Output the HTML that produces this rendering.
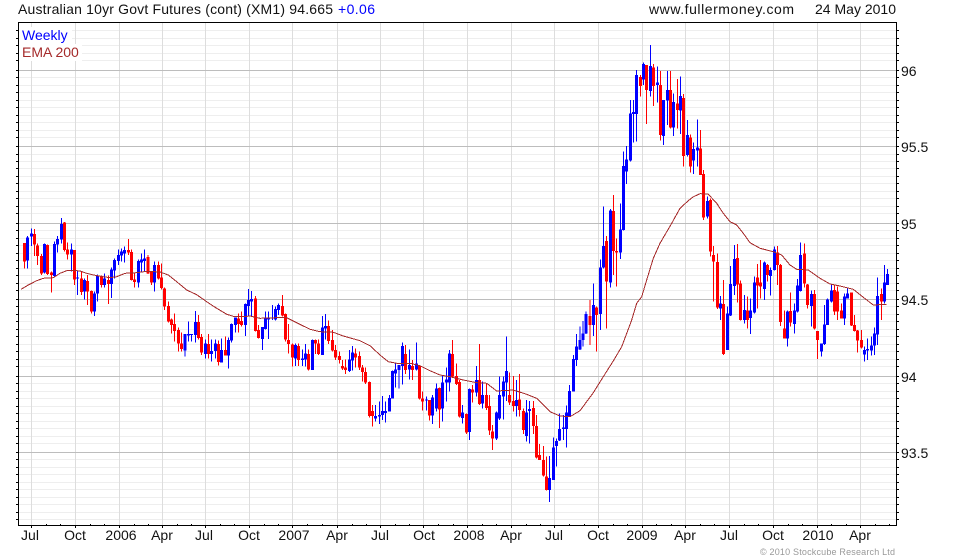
<!DOCTYPE html>
<html><head><meta charset="utf-8"><title>Chart</title>
<style>
html,body{margin:0;padding:0;background:#fff}
svg{display:block}
text{font-family:"Liberation Sans",Arial,sans-serif;font-size:14px;fill:#111}
.bw,.bb{stroke:#0000ff;fill:none}
.rw,.rb{stroke:#ff0000;fill:none}
.bw,.rw{stroke-width:3}
.bb,.rb{stroke-width:9}
</style></head><body>
<svg xmlns="http://www.w3.org/2000/svg" width="980" height="560" viewBox="0 0 980 560">
<rect width="980" height="560" fill="#fff"/>
<g shape-rendering="crispEdges" fill="none">
<path stroke="#eeeeee" d="M19 30.5H896M19 38.5H896M19 45.5H896M19 53.5H896M19 60.5H896M19 77.5H896M19 85.5H896M19 92.5H896M19 100.5H896M19 107.5H896M19 115.5H896M19 122.5H896M19 130.5H896M19 137.5H896M19 154.5H896M19 161.5H896M19 168.5H896M19 176.5H896M19 183.5H896M19 191.5H896M19 198.5H896M19 206.5H896M19 213.5H896M19 230.5H896M19 238.5H896M19 245.5H896M19 253.5H896M19 260.5H896M19 268.5H896M19 275.5H896M19 283.5H896M19 290.5H896M19 306.5H896M19 314.5H896M19 321.5H896M19 329.5H896M19 336.5H896M19 344.5H896M19 351.5H896M19 359.5H896M19 366.5H896M19 383.5H896M19 391.5H896M19 398.5H896M19 406.5H896M19 413.5H896M19 421.5H896M19 428.5H896M19 436.5H896M19 443.5H896M19 459.5H896M19 467.5H896M19 474.5H896M19 482.5H896M19 489.5H896M19 497.5H896M19 504.5H896M19 512.5H896M19 519.5H896"/>
<path stroke="#dddddd" d="M31.5 23V525M75.5 23V525M119.5 23V525M162.5 23V525M205.5 23V525M249.5 23V525M292.5 23V525M337.5 23V525M380.5 23V525M423.5 23V525M467.5 23V525M511.5 23V525M554.5 23V525M598.5 23V525M642.5 23V525M685.5 23V525M729.5 23V525M773.5 23V525M817.5 23V525M860.5 23V525"/>
<path stroke="#bdbdbd" d="M19 70.5H896M19 146.5H896M19 223.5H896M19 299.5H896M19 376.5H896M19 452.5H896"/>
</g>
<rect x="19" y="27" width="53" height="17" fill="#fff"/>
<rect x="19" y="44" width="63" height="17" fill="#fff"/>

<g shape-rendering="crispEdges">
<g transform="translate(10 210) scale(.33333)">
<path class="bw" d="M52 78V176M64 55V108M103 100V190M133 95V200M142 78V128M154 24V100M184 100V185M203 183V255M223 205V268M253 245V318M263 193V275M284 190V232M304 172V264M313 145V205M325 118V165M334 115V155M343 110V158M385 148V233M394 130V185M403 118V185M433 155V245M525 372V440M535 335V395M545 372V395M556 303V398M586 388V445M605 388V455M616 388V445M635 385V458M656 382V476M664 340V398M676 323V368M706 280V378M715 237V318M724 243V320"/>
<path class="bb" d="M52 82V152M64 70V80M103 102V188M133 102V198M142 87V104M154 42V88M184 118V134M203 202V206M223 210V245M253 250V305M263 198V250M284 205V225M304 178V222M313 150V182M325 135V153M334 125V137M343 120V130M385 153V218M394 148V158M403 145V153M433 165V218M525 372V422M535 372V377M545 372V375M556 336V375M586 400V432M605 423V432M616 400V423M635 420V458M656 390V437M664 342V392M676 323V345M706 282V345M715 270V288M724 267V275"/>
<path class="rw" d="M43 99V176M73 57V138M83 100V165M94 132V195M113 103V195M124 185V248M163 36V125M173 98V148M193 120V225M214 185V255M232 195V285M244 242V310M274 196V232M295 196V282M355 87V135M364 118V212M374 188V233M414 135V192M424 183V225M445 155V208M454 160V238M463 232V300M475 275V338M484 325V370M493 310V395M505 353V425M514 368V425M565 315V388M574 372V435M595 372V445M625 392V467M646 380V437M685 310V368M694 305V350M736 258V365M745 345V386"/>
<path class="rb" d="M43 99V155M73 72V104M83 106V138M94 138V190M113 105V192M124 188V195M163 38V120M173 118V134M193 120V208M214 205V246M232 213V245M244 243V305M274 198V225M295 210V222M355 120V128M364 126V210M374 208V216M414 141V190M424 185V217M445 165V205M454 202V234M463 235V290M475 288V335M484 328V345M493 342V363M505 360V400M514 400V417M565 336V384M574 381V428M595 402V432M625 402V456M646 420V437M685 326V342M694 333V345M736 265V363M745 360V384"/>
</g>
<g transform="translate(250 280) scale(.33333)">
<path class="bw" d="M37 141V210M46 95V148M55 95V177M67 75V120M76 80V122M85 70V105M136 190V258M157 208V258M166 192V260M187 178V270M217 108V225M226 102V178M298 210V276M307 198V272M376 375V425M388 365V432M397 348V420M406 365V428M418 345V395M427 272V355M436 250V322M447 265V325M457 187V313M478 208V298M499 188V272M529 350V392M547 345V432M559 310V395M577 285V425M589 262V365M598 210V335M637 375V430M658 325V480M679 258V350M697 305V385M739 395V480M748 290V420"/>
<path class="bb" d="M37 141V177M46 113V147M55 113V118M67 112V116M76 87V118M85 75V90M136 195V235M157 235V240M166 220V238M187 180V270M217 142V225M226 138V145M298 238V273M307 218V242M376 408V415M388 405V410M397 393V405M406 393V399M418 354V395M427 273V355M436 268V280M447 255V270M457 198V258M478 255V268M499 250V268M529 358V362M547 352V407M559 325V385M577 308V386M589 298V308M598 220V308M637 397V414M658 327V456M679 300V338M697 345V370M739 397V475M748 345V415"/>
<path class="rw" d="M97 45V110M106 100V185M115 132V220M127 190V260M145 190V258M175 208V272M196 178V222M205 178V225M235 122V192M247 150V215M256 195V240M268 215V250M277 240V270M286 238V282M316 205V262M328 215V270M337 255V305M347 262V312M358 305V412M367 375V440M466 195V282M487 240V300M508 255V358M517 335V392M538 360V422M568 322V444M607 180V292M619 250V315M628 300V412M649 400V462M667 315V368M688 192V375M709 310V390M718 345V465M727 435V510"/>
<path class="rb" d="M97 78V107M106 102V178M115 180V192M127 193V232M145 198V240M175 222V268M196 180V190M205 190V222M235 138V183M247 180V212M256 210V232M268 228V240M277 258V265M286 262V270M316 220V232M328 228V263M337 263V276M347 276V308M358 306V408M367 393V408M466 222V270M487 258V270M508 258V356M517 355V365M538 360V407M568 324V388M607 222V290M619 288V312M628 306V410M649 402V458M667 328V338M688 300V372M709 345V384M718 378V452M727 454V475"/>
</g>
<g transform="translate(480 340) scale(.33333)">
<path class="bw" d="M70 110V238M79 -10V183M109 120V230M139 180V305M148 183V310M208 348V486M220 292V420M229 295V380M238 220V303M250 225V300M259 197V323M268 135V230M280 45V155M289 -18V78"/>
<path class="bb" d="M70 125V170M79 93V128M109 180V198M139 218V288M148 207V213M208 414V450M220 322V420M229 303V318M238 267V302M250 262V267M259 218V267M268 153V228M280 57V155M289 20V60"/>
<path class="rw" d="M88 97V195M100 108V215M118 102V230M130 205V282M160 183V282M169 225V355M178 312V360M190 318V410M199 350V452"/>
<path class="rb" d="M88 165V187M100 183V198M118 178V210M130 213V270M160 204V258M169 258V353M178 345V360M190 360V407M199 410V450"/>
</g>
<g transform="translate(560 190) scale(.33333)">
<path class="bw" d="M60 410V480M69 393V470M78 365V432M100 280V438M121 208V420M130 50V235M151 57V293M181 40V207"/>
<path class="bb" d="M60 450V478M69 430V450M78 372V430M100 345V405M121 232V372M130 168V232M151 62V278M181 118V188"/>
<path class="rw" d="M90 330V465M109 350V485M139 138V416M160 15V255M169 145V290"/>
<path class="rb" d="M90 378V405M109 352V375M139 153V275M160 63V183M169 183V188"/>
</g>
<g transform="translate(570 40) scale(.33333)">
<path class="bw" d="M160 335V572M169 318V432M181 180V365M190 180V308M199 90V305M220 68V135M241 15V170M262 80V188M280 180V315M292 93V255M310 160V288M331 110V282M352 240V350M370 308V402M382 238V380"/>
<path class="bb" d="M160 378V570M169 358V395M181 220V362M190 216V222M199 105V222M220 72V118M241 78V153M262 128V135M280 180V288M292 150V182M310 186V263M331 168V212M352 285V345M370 327V362M382 322V332"/>
<path class="rw" d="M211 105V170M229 75V252M250 72V198M271 93V302M301 93V265M322 117V265M340 162V380M361 283V398M391 270V405"/>
<path class="rb" d="M211 111V138M229 75V150M250 82V138M271 135V285M301 150V263M322 190V210M340 174V348M361 292V380M391 325V405"/>
</g>
<g transform="translate(680 190) scale(.33333)">
<path class="bw" d="M82 20V85M121 318V390M142 350V480M151 228V378M163 165V315M193 315V400M211 325V432M223 260V370M253 215V330M271 232V316M283 170V242M322 362V470M343 340V430M352 267V367M361 158V305M394 302V410M424 460V500M433 345V465M442 325V405M454 285V338M493 310V405M502 295V325M553 470V515M562 445V510M574 440V497M583 412V495M592 262V465M613 225V340M622 237V285"/>
<path class="bb" d="M82 33V80M121 340V356M142 370V480M151 282V376M163 207V288M193 360V390M211 362V384M223 278V367M253 218V297M271 240V258M283 178V240M322 365V445M343 362V402M352 286V365M361 195V303M394 312V348M424 460V484M433 403V462M442 328V405M454 302V335M493 320V386M502 310V325M553 480V494M562 477V482M574 467V482M583 430V467M592 318V433M613 277V335M622 252V285"/>
<path class="rw" d="M70 -60V90M91 25V200M100 168V335M112 190V357M130 270V495M172 162V338M181 272V392M202 320V415M232 222V356M241 210V325M262 222V275M292 168V285M301 222V408M313 362V445M332 308V410M373 160V293M382 282V355M403 300V418M412 423V507M463 285V375M472 290V390M484 340V385M514 308V408M523 375V425M532 420V488M544 420V475M604 295V390"/>
<path class="rb" d="M70 -48V83M91 30V185M100 195V215M112 216V353M130 342V492M172 204V283M181 280V390M202 362V390M232 262V287M241 278V290M262 225V255M292 188V225M301 225V396M313 415V445M332 363V398M373 190V280M382 284V345M403 312V416M412 423V450M463 300V365M472 305V365M484 362V385M514 308V406M523 405V423M532 422V452M544 450V473M604 312V335"/>
</g>
</g>

<polyline shape-rendering="crispEdges" fill="none" stroke="#a52a2a" stroke-width="1" points="21,289.3 28.3,285 36.7,280.7 43.3,278.3 53.3,277.7 60,273.3 66.7,270.7 73.3,270.3 80,271 86.7,273.3 93.3,275 103.3,276.7 110,277.7 116.7,276.7 125,273.3 136.7,272.7 146.7,271.3 160,272 168.3,275 176.7,281.7 186.7,290 196.7,294.7 206.7,301.7 216.7,308.3 226.7,314.3 233.3,316.3 243.3,316.7 250,316 260,318.3 276.7,317.7 286.7,317.7 296.7,322.7 310,329.3 320,331.7 333.3,332.3 343.3,336 360,340.7 370,345.7 380,355 388.3,361.7 396.7,363.3 410,363.3 420,365.7 430,370.7 440,375 450,376.7 463.3,380 476.7,382.7 486.7,383.3 496.7,391 513.3,390 526.7,394.3 536.7,398.3 550,411.7 560,416 570,416.7 580,410.7 593.3,392.7 603.3,376.7 614.3,359.3 621.7,346.7 631.7,320 636.7,303.3 641.7,296.7 646.7,280 653.3,258.3 660,243.3 671.7,223.3 680,208.3 688.3,200.7 693,197 700,193.7 708,194 716.7,203.3 723.3,213.3 730,221.7 736.7,225 743.3,233.3 750,242.7 760,248.3 773.3,251.7 781.7,255 790,265 796.7,269.3 808.3,270 820,278.3 830,284 840,286 853.3,289.3 863.3,297.3 873.3,305 886.7,304.3"/>

<g shape-rendering="crispEdges" fill="none" stroke="#000">
<path d="M18.5 22.5H896.5V525.5H18.5Z"/>
<path d="M16 30.5H18M16 38.5H18M16 45.5H18M16 53.5H18M16 60.5H18M16 70.5H18M16 77.5H18M16 85.5H18M16 92.5H18M16 100.5H18M16 107.5H18M16 115.5H18M16 122.5H18M16 130.5H18M16 137.5H18M16 146.5H18M16 154.5H18M16 161.5H18M16 168.5H18M16 176.5H18M16 183.5H18M16 191.5H18M16 198.5H18M16 206.5H18M16 213.5H18M16 223.5H18M16 230.5H18M16 238.5H18M16 245.5H18M16 253.5H18M16 260.5H18M16 268.5H18M16 275.5H18M16 283.5H18M16 290.5H18M16 299.5H18M16 306.5H18M16 314.5H18M16 321.5H18M16 329.5H18M16 336.5H18M16 344.5H18M16 351.5H18M16 359.5H18M16 366.5H18M16 376.5H18M16 383.5H18M16 391.5H18M16 398.5H18M16 406.5H18M16 413.5H18M16 421.5H18M16 428.5H18M16 436.5H18M16 443.5H18M16 452.5H18M16 459.5H18M16 467.5H18M16 474.5H18M16 482.5H18M16 489.5H18M16 497.5H18M16 504.5H18M16 512.5H18M16 519.5H18"/>
<path d="M897 30.5H899M897 38.5H899M897 45.5H899M897 53.5H899M897 60.5H899M897 70.5H899M897 77.5H899M897 85.5H899M897 92.5H899M897 100.5H899M897 107.5H899M897 115.5H899M897 122.5H899M897 130.5H899M897 137.5H899M897 146.5H899M897 154.5H899M897 161.5H899M897 168.5H899M897 176.5H899M897 183.5H899M897 191.5H899M897 198.5H899M897 206.5H899M897 213.5H899M897 223.5H899M897 230.5H899M897 238.5H899M897 245.5H899M897 253.5H899M897 260.5H899M897 268.5H899M897 275.5H899M897 283.5H899M897 290.5H899M897 299.5H899M897 306.5H899M897 314.5H899M897 321.5H899M897 329.5H899M897 336.5H899M897 344.5H899M897 351.5H899M897 359.5H899M897 366.5H899M897 376.5H899M897 383.5H899M897 391.5H899M897 398.5H899M897 406.5H899M897 413.5H899M897 421.5H899M897 428.5H899M897 436.5H899M897 443.5H899M897 452.5H899M897 459.5H899M897 467.5H899M897 474.5H899M897 482.5H899M897 489.5H899M897 497.5H899M897 504.5H899M897 512.5H899M897 519.5H899"/>
<path d="M31.5 526V528M75.5 526V528M119.5 526V528M162.5 526V528M205.5 526V528M249.5 526V528M292.5 526V528M337.5 526V528M380.5 526V528M423.5 526V528M467.5 526V528M511.5 526V528M554.5 526V528M598.5 526V528M642.5 526V528M685.5 526V528M729.5 526V528M773.5 526V528M817.5 526V528M860.5 526V528"/>
<path d="M46.5 524v1M60.5 524v1M90.5 524v1M104.5 524v1M134.5 524v1M148.5 524v1M177.5 524v1M191.5 524v1M220.5 524v1M234.5 524v1M264.5 524v1M278.5 524v1M307.5 524v1M322.5 524v1M352.5 524v1M366.5 524v1M395.5 524v1M409.5 524v1M438.5 524v1M453.5 524v1M482.5 524v1M496.5 524v1M526.5 524v1M540.5 524v1M569.5 524v1M584.5 524v1M613.5 524v1M627.5 524v1M656.5 524v1M671.5 524v1M700.5 524v1M714.5 524v1M744.5 524v1M758.5 524v1M788.5 524v1M802.5 524v1M831.5 524v1M846.5 524v1M875.5 524v1M889.5 524v1"/>
</g>

<text x="18" y="14" textLength="315">Australian 10yr Govt Futures (cont) (XM1) 94.665</text>
<text x="338" y="14" textLength="37" style="fill:#0000ff">+0.06</text>
<text x="649" y="14" textLength="145">www.fullermoney.com</text>
<text x="815" y="14" textLength="81">24 May 2010</text>
<text x="22" y="40" style="fill:#0000ff">Weekly</text>
<text x="22" y="57" style="fill:#a52a2a">EMA 200</text>

<text x="901" y="76">96</text>
<text x="901" y="152">95.5</text>
<text x="901" y="229">95</text>
<text x="901" y="305">94.5</text>
<text x="901" y="382">94</text>
<text x="901" y="458">93.5</text>

<g text-anchor="middle">
<text x="30" y="540">Jul</text>
<text x="75" y="540">Oct</text>
<text x="121" y="540">2006</text>
<text x="162" y="540">Apr</text>
<text x="204" y="540">Jul</text>
<text x="249" y="540">Oct</text>
<text x="294" y="540">2007</text>
<text x="337" y="540">Apr</text>
<text x="380" y="540">Jul</text>
<text x="424" y="540">Oct</text>
<text x="469" y="540">2008</text>
<text x="511" y="540">Apr</text>
<text x="554" y="540">Jul</text>
<text x="598" y="540">Oct</text>
<text x="642" y="540">2009</text>
<text x="685" y="540">Apr</text>
<text x="729" y="540">Jul</text>
<text x="773" y="540">Oct</text>
<text x="818" y="540">2010</text>
<text x="860" y="540">Apr</text>
</g>
<text x="760" y="555" textLength="135" style="font-size:9px;fill:#999">© 2010 Stockcube Research Ltd</text>
</svg>
</body></html>
